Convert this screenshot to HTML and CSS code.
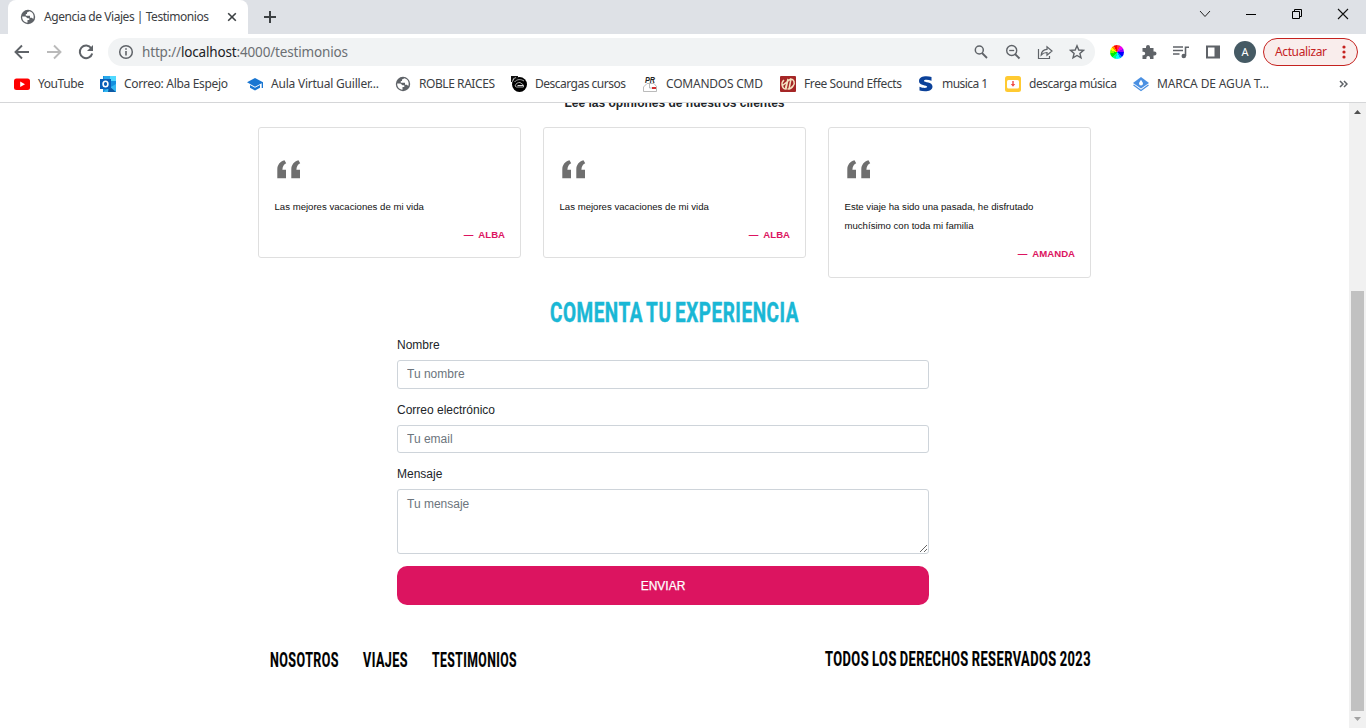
FILE: index.html
```html
<!DOCTYPE html>
<html lang="es">
<head>
<meta charset="utf-8">
<title>Agencia de Viajes | Testimonios</title>
<link rel="stylesheet" href="styles.css">
</head>
<body>
<svg class="defs" width="0" height="0">
  <defs>
    <symbol id="globe" viewBox="0 0 16 16"><circle cx="8" cy="8" r="7.2" fill="#5f6368"/><path d="M2.200 7.500H5.500L7.500 9.300H9.300V11H7.500V13.700C4 13.300 2 10.800 2.200 7.500ZM9.500 2.300 7 3.500V5H5.800V6.700H10V8.800H11.800L13.300 10C14.600 6.500 12.700 3 9.500 2.300Z" fill="#fff"/></symbol>
    <symbol id="quote" viewBox="0 0 24 19"><path id="mark" d="M.3 18.300V9.500C.3 5 3 1.500 7.500.3L9.200 3.300C6.700 4.500 5.600 6.500 5.400 9.700H9V18.300Z"/><use href="#mark" x="14"/></symbol>
  </defs>
</svg>
<header class="browser">
  <div class="tabstrip">
    <div class="tab">
      <svg class="ic16"><use href="#globe"/></svg>
      <svg class="label tab-title" width="166" height="18"><text y="13" textLength="165">Agencia de Viajes | Testimonios</text></svg>
      <svg class="ic10" viewBox="0 0 10 10"><path d="M1.200 1.200 8.800 8.800M8.800 1.200 1.200 8.800" stroke="#3c4043" stroke-width="1.600"/></svg>
    </div>
    <svg class="plus" viewBox="0 0 12 12"><path d="M6 0V12M0 6H12" stroke="#3c4043" stroke-width="2"/></svg>
    <div class="window">
      <svg width="12" height="12"><path d="M1 3 6 8.500 11 3" fill="none" stroke="#222"/></svg>
      <svg width="12" height="12"><path d="M1 6.500H11" stroke="#000"/></svg>
      <svg width="12" height="12"><path d="M1.500 3.500H8.500V10.500H1.500ZM3.500 3.500V1.500H10.500V8.500H8.500" fill="none" stroke="#000"/></svg>
      <svg width="12" height="12"><path d="M1 1 11 11M11 1 1 11" stroke="#111" stroke-width="1.100"/></svg>
    </div>
  </div>
  <div class="toolbar">
    <div class="nav">
      <svg viewBox="0 0 16 16"><path d="M15 8H2M8 1.500 1.500 8 8 14.500" fill="none" stroke="#5f6368" stroke-width="1.900"/></svg>
      <svg viewBox="0 0 16 16"><path d="M1 8H14M8 1.500 14.500 8 8 14.500" fill="none" stroke="#bababa" stroke-width="1.900"/></svg>
      <svg viewBox="0 0 16 16"><path d="M13.300 4.300A6.300 6.300 0 1 0 14.200 9.500" fill="none" stroke="#5f6368" stroke-width="2"/><path d="M15 1V7H9Z" fill="#5f6368"/></svg>
    </div>
    <div class="omnibox">
      <svg class="ic16" viewBox="0 0 16 16"><circle cx="8" cy="8" r="6.300" fill="none" stroke="#5f6368" stroke-width="1.500"/><path d="M8 7V11.500M8 4.200V5.800" stroke="#5f6368" stroke-width="1.600"/></svg>
      <svg class="label url" width="207" height="20"><text y="15" textLength="206">http://<tspan fill="#202124">localhost</tspan>:4000/testimonios</text></svg>
      <div class="actions">
        <svg viewBox="0 0 16 16"><circle cx="6.300" cy="6" r="4" fill="none" stroke="#5f6368" stroke-width="1.500"/><path d="M9 9 14 14" stroke="#5f6368" stroke-width="1.800"/></svg>
        <svg viewBox="0 0 16 16"><circle cx="6.700" cy="6.500" r="5" fill="none" stroke="#5f6368" stroke-width="1.400"/><path d="M10 10 14.500 14.500" stroke="#5f6368" stroke-width="1.900"/><path d="M4.200 6.500H9.200" stroke="#5f6368" stroke-width="1.300"/></svg>
        <svg viewBox="0 0 16 16"><path d="M1.500 5V14.500H12.500V12M4.200 11C4.500 7.300 6.500 5.600 10 5.400V2.700L15 7 10 11.200V8.500C7.500 8.500 5.700 9.200 4.200 11Z" fill="none" stroke="#5f6368" stroke-width="1.200"/></svg>
        <svg viewBox="0 0 16 16"><path d="M8 1.800 9.800 6 14.400 6.400 10.900 9.400 12 13.900 8 11.500 4 13.900 5.100 9.400 1.600 6.400 6.200 6Z" fill="none" stroke="#5f6368" stroke-width="1.400"/></svg>
      </div>
    </div>
    <div class="extensions">
      <div class="wheel"></div>
      <svg viewBox="0 0 16 16"><path d="M1.500 4H5V3A2 2 0 0 1 9 3V4H12.500V7.500H13.500A2 2 0 0 1 13.500 11.500H12.500V15H9V13.800A1.800 1.800 0 0 0 5.400 13.800V15H1.500V11.200H2.500A1.700 1.700 0 0 0 2.500 7.800H1.500Z" fill="#5f6368"/></svg>
      <svg viewBox="0 0 16 16"><path d="M0 3H10M0 6.500H10M0 10H6.500M12.500 12V3.200H16" fill="none" stroke="#5f6368" stroke-width="1.600"/><circle cx="10.800" cy="12" r="2.300" fill="#5f6368"/></svg>
      <svg viewBox="0 0 16 16"><path d="M2 2.500H14V13.500H2Z" fill="#fff" stroke="#5f6368" stroke-width="2"/><path d="M9.500 2H14V14H9.500Z" fill="#5f6368"/></svg>
      <div class="avatar">A</div>
    </div>
    <div class="update">
      <svg class="label" width="53" height="18"><text y="13" textLength="52">Actualizar</text></svg>
      <svg width="4" height="14" viewBox="0 0 4 14" fill="#c5221f"><circle cx="2" cy="2" r="1.600"/><circle cx="2" cy="7" r="1.600"/><circle cx="2" cy="12" r="1.600"/></svg>
    </div>
  </div>
  <nav class="bookmarks">
    <div class="bookmark"><svg class="ic16" viewBox="0 0 16 16"><rect y="2.500" width="16" height="11.500" rx="2.500" fill="#f00"/><path d="M6.200 5.500 11 8.200 6.200 10.900Z" fill="#fff"/></svg><svg class="label" width="47" height="18"><text y="13" textLength="46">YouTube</text></svg></div>
    <div class="bookmark"><svg class="ic16" viewBox="0 0 16 16"><path d="M3 0H16V16H3Z" fill="#1490df"/><path d="M9 0H16V5H9Z" fill="#50d9ff"/><path d="M4 0H10V5H4Z" fill="#28a8ea"/><path d="M4 15 16 8V16H4Z" fill="#35b8f1"/><path d="M9 10 16 16H8Z" fill="#0c59a4"/><path d="M0 3H11V13H0Z" fill="#0a5fb8"/><ellipse cx="5.500" cy="8" rx="2.400" ry="2.700" fill="none" stroke="#fff" stroke-width="1.600"/></svg><svg class="label" width="105" height="18"><text y="13" textLength="104">Correo: Alba Espejo</text></svg></div>
    <div class="bookmark"><svg class="ic16" viewBox="0 0 16 16"><path d="M8 2 16 6.300V12H14.700V7.200L8 10.700 0 6.300Z" fill="#1976d2"/><path d="M3 9 8 11.800 13 9V11.800L8 14.600 3 11.800Z" fill="#1976d2"/></svg><svg class="label" width="109" height="18"><text y="13" textLength="108">Aula Virtual Guiller...</text></svg></div>
    <div class="bookmark"><svg class="ic16"><use href="#globe"/></svg><svg class="label" width="77" height="18"><text y="13" textLength="76">ROBLE RAICES</text></svg></div>
    <div class="bookmark"><svg class="ic16" viewBox="0 0 16 16"><circle cx="8.500" cy="8.500" r="7.500" fill="#000"/><path d="M0 0H7V3H2L1 6H0Z" fill="#111"/><path d="M2 3 5 1.500M3.500 6C6 3 10 3 13 5M4 10C5 7 7 6.500 9 6.500L12.500 9V11H5.500Z" fill="none" stroke="#bbb" stroke-width=".9"/><path d="M6.500 9.500H12" stroke="#ddd"/></svg><svg class="label" width="92" height="18"><text y="13" textLength="91">Descargas cursos</text></svg></div>
    <div class="bookmark"><svg class="ic16" viewBox="0 0 16 16"><text class="pr" x="3" y="6.500" textLength="10" lengthAdjust="spacingAndGlyphs">PR</text><path d="M1.500 15.500V11L5 7.500H12L14.500 10.500V15.500H1.500M7.500 8V12H14" fill="none" stroke="#aaa" stroke-width=".8"/><path d="M10 11H14V13H10Z" fill="#d32f2f"/></svg><svg class="label" width="98" height="18"><text y="13" textLength="97">COMANDOS CMD</text></svg></div>
    <div class="bookmark"><svg class="ic16" viewBox="0 0 16 16"><rect width="16" height="16" rx="1" fill="#a52626"/><path d="M4 4C.5 7 2 13 6 13L8 3 5.500 12M10 3C14 2.500 15.500 7 13 10 11.500 12.500 9 13 7.500 13M11 3 9 13M2.500 9.500 10.500 3" fill="none" stroke="#f4e3c0" stroke-width="1.500"/></svg><svg class="label" width="99" height="18"><text y="13" textLength="98">Free Sound Effects</text></svg></div>
    <div class="bookmark"><svg class="ic16" viewBox="0 0 16 16"><path d="M13.500 1V4.700C10.500 3.800 6 3.300 6 4.900 6 6.500 14.500 5.500 14.500 10.500 14.500 16 6 15.700 1.500 14.500V10.700C5 12.200 9.200 12.300 9.200 10.800 9.200 9 1 9.800 1 5.200 1 0 8.500-.3 13.500 1Z" fill="#0b4199"/></svg><svg class="label" width="47" height="18"><text y="13" textLength="46">musica 1</text></svg></div>
    <div class="bookmark"><svg class="ic16" viewBox="0 0 16 16"><rect width="16" height="16" rx="2.500" fill="#ffca32"/><rect x="2" y="4" width="12" height="8.500" rx="1.500" fill="#fff"/><path d="M7.300 5H8.700V8H10.200L8 10.800 5.800 8H7.300Z" fill="#ef4b43"/></svg><svg class="label" width="89" height="18"><text y="13" textLength="88">descarga música</text></svg></div>
    <div class="bookmark"><svg class="ic16" viewBox="0 0 16 16"><path d="M8 1 16 7 8 12.500 0 7Z" fill="#4a90e2"/><path d="M.5 9 8 14.500 15.500 9" fill="none" stroke="#4a90e2" stroke-width="1.300"/><path d="M8 3.700C9 5.500 10 6.300 10 7.600A2 2 0 0 1 6 7.600C6 6.300 7 5.500 8 3.700Z" fill="#fff"/></svg><svg class="label" width="113" height="18"><text y="13" textLength="112">MARCA DE AGUA T...</text></svg></div>
    <svg class="more" width="9" height="8" viewBox="0 0 9 8"><path d="M1 1 4 4 1 7M5 1 8 4 5 7" fill="none" stroke="#5f6368" stroke-width="1.500"/></svg>
  </nav>
</header>
<div class="viewport">
  <main class="page">
    <h3 class="lead">Lee las opiniones de nuestros clientes</h3>
    <section class="cards">
      <article class="card"><svg class="quote"><use href="#quote"/></svg><p class="text">Las mejores vacaciones de mi vida</p><p class="author">—&nbsp; Alba</p></article>
      <article class="card"><svg class="quote"><use href="#quote"/></svg><p class="text">Las mejores vacaciones de mi vida</p><p class="author">—&nbsp; Alba</p></article>
      <article class="card tall"><svg class="quote"><use href="#quote"/></svg><p class="text">Este viaje ha sido una pasada, he disfrutado muchísimo con toda mi familia</p><p class="author">—&nbsp; Amanda</p></article>
    </section>
    <h2 class="heading"><svg width="250" height="28"><text y="24" textLength="249" lengthAdjust="spacingAndGlyphs">COMENTA TU EXPERIENCIA</text></svg></h2>
    <form class="form">
      <label for="nombre">Nombre</label>
      <input id="nombre" type="text" placeholder="Tu nombre">
      <label for="correo">Correo electrónico</label>
      <input id="correo" class="email" type="email" placeholder="Tu email">
      <label for="mensaje">Mensaje</label>
      <textarea id="mensaje" placeholder="Tu mensaje"></textarea>
      <button type="button">ENVIAR</button>
    </form>
    <footer class="footer">
      <nav class="links">
        <svg width="69" height="24"><text y="19" textLength="69" lengthAdjust="spacingAndGlyphs">NOSOTROS</text></svg>
        <svg width="45" height="24"><text y="19" textLength="45" lengthAdjust="spacingAndGlyphs">VIAJES</text></svg>
        <svg width="86" height="24"><text y="19" textLength="85" lengthAdjust="spacingAndGlyphs">TESTIMONIOS</text></svg>
      </nav>
      <svg width="266" height="24"><text y="18" textLength="266" lengthAdjust="spacingAndGlyphs">TODOS LOS DERECHOS RESERVADOS 2023</text></svg>
    </footer>
  </main>
  <div class="scrollbar">
    <svg width="17" height="17"><path d="M5 11H12L8.500 7Z" fill="#505050"/></svg>
    <div class="thumb"></div>
    <svg width="17" height="17"><path d="M5 6H12L8.500 10Z" fill="#a3a3a3"/></svg>
  </div>
</div>
</body>
</html>
```

FILE: styles.css
```css
* { box-sizing: border-box; }
body { margin: 0; width: 1366px; height: 728px; overflow: hidden; display: flex; flex-direction: column; background: #fff; font-family: "Liberation Sans", Arial, sans-serif; font-size: 12px; color: #212529; }
svg { display: block; flex: none; }
.defs { display: none; }
.browser { flex: none; height: 103px; border-bottom: 1px solid #d5d6d8; font-family: "Noto Sans", sans-serif; }
.ic16 { width: 16px; height: 16px; }
.ic10 { width: 10px; height: 10px; }
.label { fill: #3c4043; font-size: 12px; overflow: visible; }

.tabstrip { height: 34px; background: #dee1e6; display: flex; align-items: center; padding-left: 8px; }
.tab { width: 240px; height: 34px; background: #fff; border-radius: 8px 8px 0 0; display: flex; align-items: center; padding-left: 12px; }
.tab-title { margin: 0 17px 0 8px; }
.plus { width: 12px; height: 12px; margin-left: 16px; }
.window { margin: -7px 17px 0 auto; display: flex; gap: 34px; }

.toolbar { height: 36px; display: flex; align-items: center; padding: 0 8px 0 14px; }
.nav { display: flex; gap: 16px; }
.nav svg { width: 16px; height: 16px; }
.omnibox { width: 987px; height: 28px; margin-left: 14px; border-radius: 14px; background: #f1f3f4; display: flex; align-items: center; padding: 0 10px; }
.url { margin-left: 8px; fill: #6b6f73; font-size: 13.5px; }
.actions { margin-left: auto; display: flex; gap: 16px; }
.actions svg { width: 16px; height: 16px; }
.extensions { display: flex; align-items: center; gap: 16px; margin-left: 14px; }
.extensions svg { width: 16px; height: 16px; }
.wheel { width: 14px; height: 14px; margin: 0 1px; border-radius: 50%; background: conic-gradient(#f33 0 8%, #e0e 8% 17%, #80f 17% 25%, #00f 25% 36%, #08f 36% 43%, #0ff 43% 52%, #0f8 52% 62%, #0e0 62% 72%, #8f0 72% 80%, #ff0 80% 86%, #f80 86% 93%, #f00 93%); }
.avatar { width: 22px; height: 22px; margin-left: -3px; border-radius: 50%; background: #455a64; color: #fff; font-size: 11px; line-height: 22px; text-align: center; }
.update { width: 95px; height: 28px; margin-left: auto; border: 1px solid #c5221f; border-radius: 14px; background: #f9edec; display: flex; align-items: center; justify-content: space-between; padding: 0 11px; }
.update .label { fill: #c5221f; }

.bookmarks { height: 32px; padding: 0 18px 4px 14px; display: grid; grid-template-columns: 86px 147px 148px 116px 131px 138px 138px 87px 128px 1fr 9px; align-items: center; }
.bookmark { display: flex; align-items: center; gap: 8px; }
.pr { font: italic bold 8.5px "Liberation Sans", sans-serif; fill: #222; }

.viewport { flex: 1; min-height: 0; display: flex; overflow: hidden; }
.page { flex: 1; display: flex; flex-direction: column; align-items: center; }
.lead { margin: -9px 0 0; height: 33px; font-size: 12px; line-height: 18px; font-weight: bold; }
.cards { width: 833px; height: 151px; display: grid; grid-template-columns: repeat(3, 263px); gap: 22px; align-items: start; }
.card { border: 1px solid #dfdfdf; border-radius: 3px; padding: 32px 15px 13px; font-size: 9.6px; }
.tall { height: 151px; }
.quote { width: 24px; height: 19px; margin-left: 3px; fill: #6f6f6f; }
.text { margin: 18px 0 9px .5px; line-height: 19px; color: #111; }
.author { margin: 0; line-height: 19px; text-align: right; text-transform: uppercase; font-weight: bold; color: #dc1460; }
.heading { margin: 20px 0 0; font: bold 28px Roboto, sans-serif; fill: #1ab7d5; stroke: #1ab7d5; stroke-width: .5px; letter-spacing: .8px; word-spacing: -2.5px; }
.heading svg, .footer svg { overflow: visible; }
.form { width: 532px; margin: 10px 23px 0 0; display: flex; flex-direction: column; }
.form label { height: 24px; line-height: 18px; }
.form input, .form textarea { font: 12px "Liberation Sans", Arial, sans-serif; border: 1px solid #ced4da; border-radius: 3px; padding: 0 9px; margin: 0 0 12px; }
.form input { height: 29px; padding-bottom: 2px; }
.form .email { height: 28px; padding-bottom: 0; }
.form textarea { height: 65px; padding-top: 7px; }
.form ::placeholder { color: #6c757d; opacity: 1; }
.form button { height: 39px; border: 0; border-radius: 10px; background: #dc1460; color: #fff; font: 12px "Liberation Sans", Arial, sans-serif; -webkit-text-stroke: .25px #fff; }
.footer { width: 821px; margin: 43px 0 0 12px; display: flex; justify-content: space-between; font: bold 19.5px Roboto, sans-serif; fill: #000; stroke: #000; stroke-width: .2px; letter-spacing: .7px; word-spacing: -1px; }
.links { display: flex; gap: 24px; }
.scrollbar { width: 17px; background: #f1f1f1; display: flex; flex-direction: column; }
.thumb { width: 13px; height: 420px; margin: auto 2px 0; background: #c1c1c1; }
```
